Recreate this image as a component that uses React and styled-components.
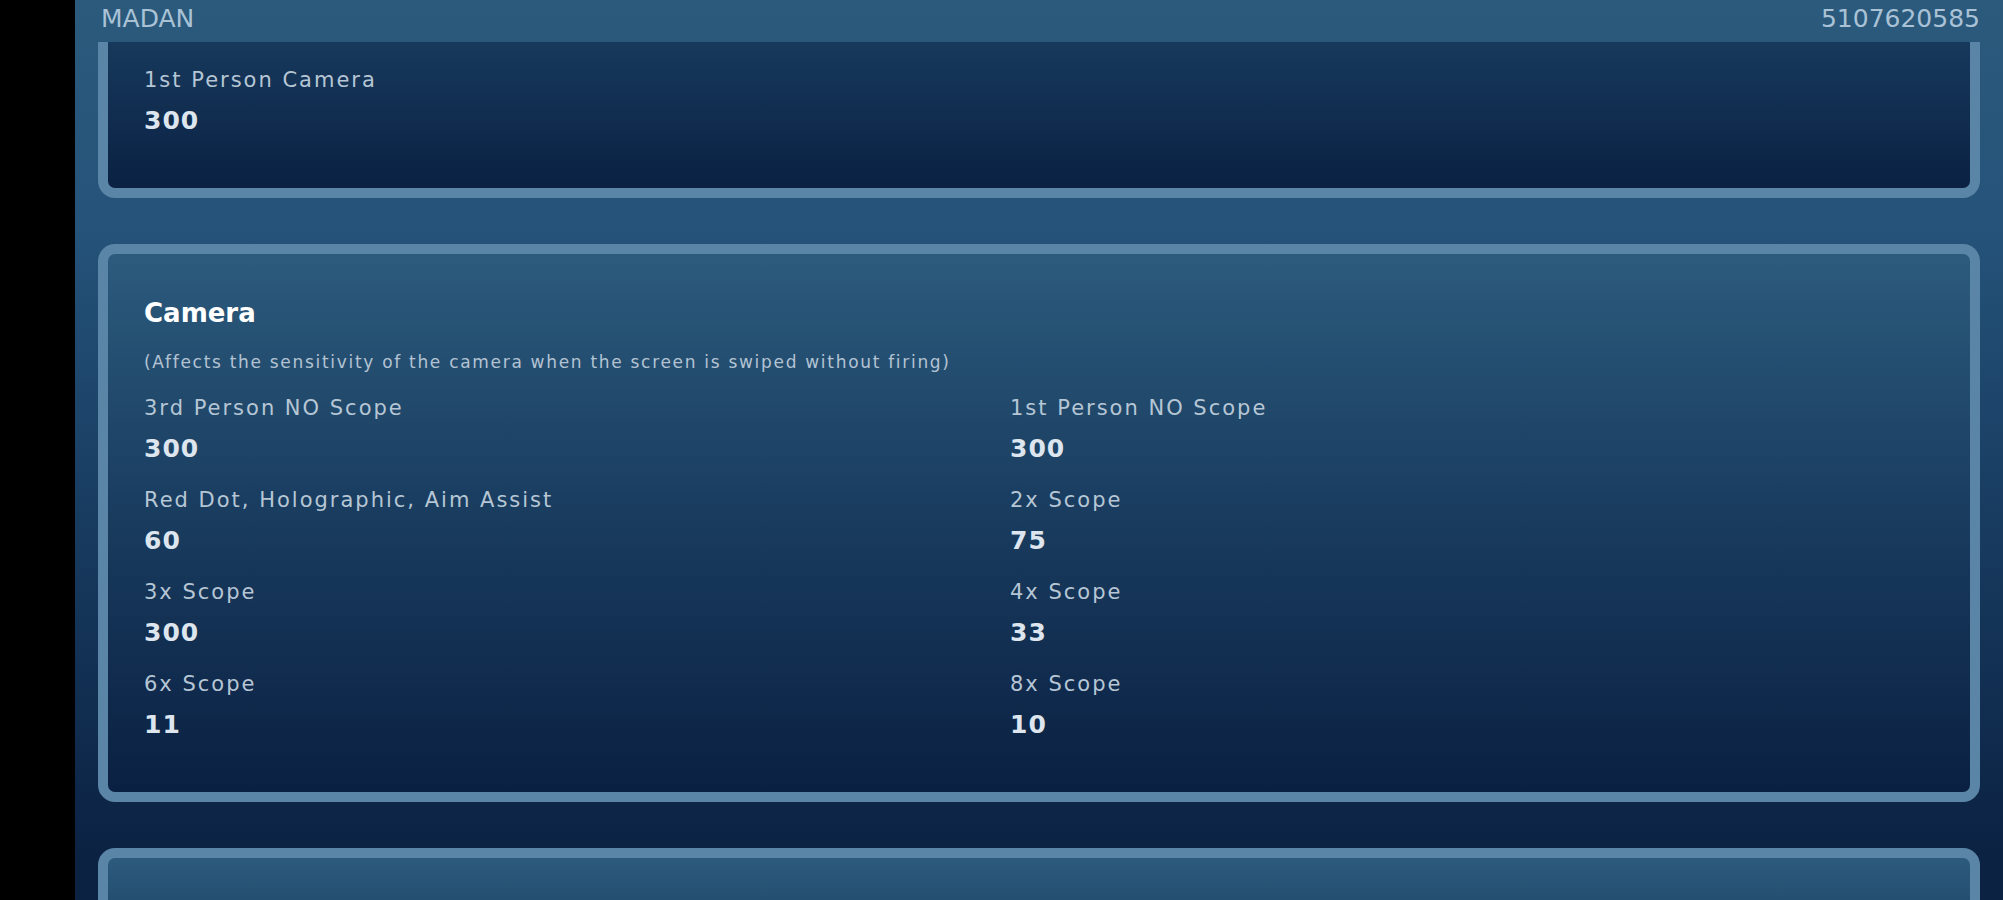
import React from "react";
import styled, { createGlobalStyle } from "styled-components";

const GlobalStyle = createGlobalStyle`
  html, body {
    margin: 0;
    padding: 0;
    background: #000;
    overflow: hidden;
  }
  * { box-sizing: border-box; }
`;

const Shell = styled.div`
  display: flex;
  height: 100vh;
  width: 100vw;
  font-family: "DejaVu Sans", "Liberation Sans", sans-serif;
`;

const Bezel = styled.div`
  flex: 0 0 75px;
  background: #000;
`;

const Screen = styled.main`
  flex: 1;
  display: flex;
  flex-direction: column;
  overflow: hidden;
  background: linear-gradient(
    180deg,
    #2b5a7c 0%,
    #25537a 25%,
    #173a5e 60%,
    #0b2243 95%
  );
`;

const Header = styled.header`
  flex: 0 0 42px;
  display: flex;
  align-items: center;
  justify-content: space-between;
  padding: 0 23px 4px 26px;
  color: #a9c2d6;
  font-size: 25px;
  line-height: 30px;
`;

const CardList = styled.div`
  display: flex;
  flex-direction: column;
  gap: 46px;
  padding: 0 23px;
`;

const Card = styled.section`
  border: 10px solid #5a85a6;
  border-radius: 17px;
  padding: 42px 36px 51px;
  min-height: ${(p) => (p.$open ? "240px" : "auto")};
  background: ${(p) =>
    p.$clipped
      ? "linear-gradient(180deg, #17395c 0%, #0a2143 100%)"
      : "linear-gradient(180deg, #2c5b7d 0%, #1a3e61 45%, #0a2042 100%)"};
  ${(p) =>
    p.$clipped &&
    `
    border-top: none;
    border-top-left-radius: 0;
    border-top-right-radius: 0;
    padding-top: 23px;
  `}
`;

const Title = styled.h2`
  margin: 0;
  color: #ffffff;
  font-size: 26px;
  line-height: 34px;
  font-weight: 700;
`;

const Description = styled.p`
  margin: 20px 0 19px;
  color: #b3c3d3;
  font-size: 17px;
  line-height: 24px;
  letter-spacing: 1.7px;
`;

const FieldGrid = styled.div`
  display: grid;
  grid-template-columns: 866px 1fr;
  row-gap: 20px;
`;

const Field = styled.div`
  display: flex;
  flex-direction: column;
  gap: 10px;
`;

const Label = styled.span`
  color: #b6c6d5;
  font-size: 21px;
  line-height: 30px;
  letter-spacing: 2px;
`;

const Value = styled.span`
  color: #dde5ee;
  font-size: 25px;
  line-height: 32px;
  font-weight: 700;
  letter-spacing: 1px;
`;

const cameraFields = [
  ["3rd Person NO Scope", "300"],
  ["1st Person NO Scope", "300"],
  ["Red Dot, Holographic, Aim Assist", "60"],
  ["2x Scope", "75"],
  ["3x Scope", "300"],
  ["4x Scope", "33"],
  ["6x Scope", "11"],
  ["8x Scope", "10"],
];

export default function App() {
  return (
    <>
      <GlobalStyle />
      <Shell>
        <Bezel />
        <Screen>
          <Header>
            <span>MADAN</span>
            <span>5107620585</span>
          </Header>
          <CardList>
            <Card $clipped>
              <Field>
                <Label>1st Person Camera</Label>
                <Value>300</Value>
              </Field>
            </Card>
            <Card>
              <Title>Camera</Title>
              <Description>
                (Affects the sensitivity of the camera when the screen is swiped without firing)
              </Description>
              <FieldGrid>
                {cameraFields.map(([label, value]) => (
                  <Field key={label}>
                    <Label>{label}</Label>
                    <Value>{value}</Value>
                  </Field>
                ))}
              </FieldGrid>
            </Card>
            <Card $open />
          </CardList>
        </Screen>
      </Shell>
    </>
  );
}
